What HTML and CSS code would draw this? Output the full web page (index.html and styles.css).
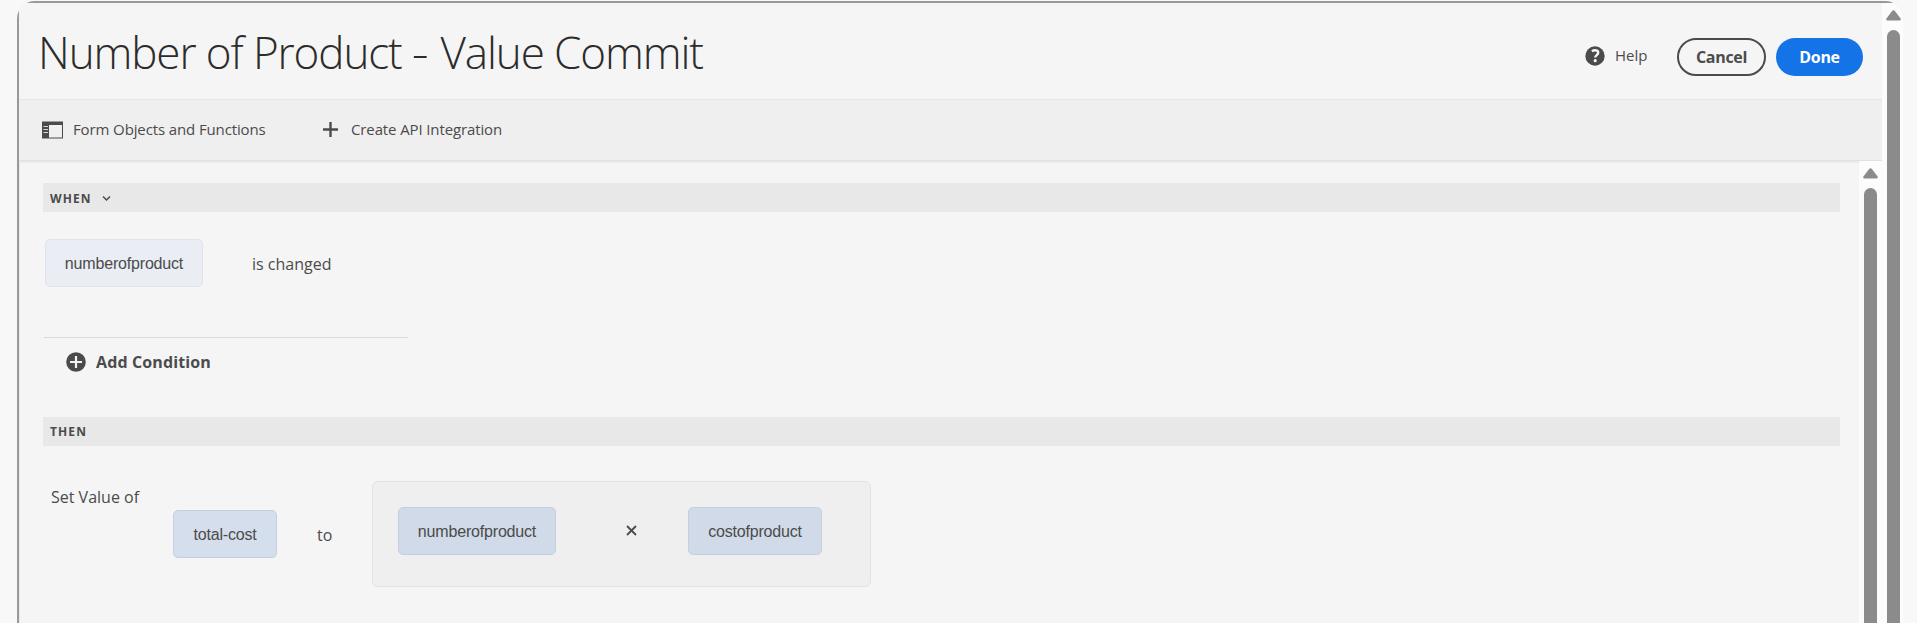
FILE: index.html
```html
<!DOCTYPE html>
<html lang="en">
<head>
<meta charset="utf-8">
<title>Rule Editor</title>
<link rel="stylesheet" href="styles.css">
</head>
<body>
<div class="panel">
  <div class="main">
    <header class="header">
      <h1 class="title">Number of Product <span class="dash">-</span> Value Commit</h1>
      <div class="actions">
        <svg class="help-icon" width="20" height="20" viewBox="0 0 20 20"><circle cx="10" cy="10" r="9.7" fill="#4b4b4b"/><path d="M6.900 5.300C8 4.500 9 4.200 10.200 4.200c1.900 0 3 1 3 2.500 0 2.200-3 2.500-3 4.800" fill="none" stroke="#f5f5f5" stroke-width="2.400"/><circle cx="10.200" cy="14.700" r="1.600" fill="#f5f5f5"/></svg>
        <span class="help">Help</span>
        <button class="btn cancel"><span>Cancel</span></button>
        <button class="btn done"><span>Done</span></button>
      </div>
    </header>
    <nav class="toolbar">
      <svg class="rail-icon" width="21" height="18" viewBox="0 0 21 18"><path d="M0 .5h21v17H0z" fill="#4b4b4b"/><path d="M7 4h13v12.500H7z" fill="#f0f0f0"/><path d="M1.500 5.500h4.500M1.500 8.500h4.500M1.500 11.500h4.500" stroke="#d8d8d8" stroke-width="1.200"/></svg>
      <span class="tool form-objects">Form Objects and Functions</span>
      <svg class="plus-icon" width="15" height="15" viewBox="0 0 15 15"><path d="M7.500 0v15M0 7.500h15" stroke="#4b4b4b" stroke-width="2.400"/></svg>
      <span class="tool api">Create API Integration</span>
    </nav>
    <div class="body">
      <div class="rule">
        <div class="section"><span class="when">WHEN</span><svg width="9" height="7" viewBox="0 0 9 7"><path d="M1 1.500l3.500 3.500L8 1.500" fill="none" stroke="#4b4b4b" stroke-width="1.500"/></svg></div>
        <div class="condition"><span class="chip pale"><span class="number">numberofproduct</span></span><span class="phrase changed">is changed</span></div>
        <div class="add">
          <svg width="20" height="20" viewBox="0 0 20 20"><circle cx="10" cy="10" r="9.800" fill="#4b4b4b"/><path d="M10 4v12M4 10h12" stroke="#f5f5f5" stroke-width="2.200"/></svg>
          <span class="add-label">Add Condition</span>
        </div>
        <div class="section then-bar"><span class="then">THEN</span></div>
        <div class="statement">
          <span class="phrase set">Set Value of</span>
          <span class="chip total"><span class="total-text">total-cost</span></span>
          <span class="phrase to">to</span>
          <div class="expression">
            <span class="chip factor"><span class="number">numberofproduct</span></span>
            <svg class="times" width="11" height="11" viewBox="0 0 11 11"><path d="M1 1l9 9M10 1l-9 9" stroke="#4b4b4b" stroke-width="1.800"/></svg>
            <span class="chip cost"><span class="cost-text">costofproduct</span></span>
          </div>
        </div>
      </div>
      <div class="scrollbar inner"><svg width="15" height="11" viewBox="0 0 15 11"><path d="M6.300.8Q7.500-.5 8.700.8L14.600 8.500Q15.200 10.500 13.500 10.500H1.500Q-.2 10.500.4 8.500Z" fill="#8b8b8b"/></svg><div class="thumb"></div></div>
    </div>
  </div>
  <div class="scrollbar outer"><svg width="15" height="11" viewBox="0 0 15 11"><path d="M6.300.8Q7.500-.5 8.700.8L14.600 8.500Q15.200 10.500 13.500 10.500H1.500Q-.2 10.500.4 8.500Z" fill="#8b8b8b"/></svg><div class="thumb"></div></div>
</div>
</body>
</html>
```
FILE: styles.css
```css
* { box-sizing: border-box; }
html, body { height: 100%; overflow: hidden; }
body { margin: 0; padding: 1px 14px 0 17px; background: #f8f8f8; color: #4b4b4b; font-family: "Open Sans", "Noto Sans", sans-serif; }
svg { display: block; flex: none; }
span { white-space: nowrap; }
.panel { display: flex; width: 1886px; height: 640px; padding: 2px 0 0 2px; border-radius: 18px; background: linear-gradient(#999, #999) 0 0 / 100% 2px no-repeat, linear-gradient(#999, #999) 0 0 / 2px 100% no-repeat, #f5f5f5; overflow: hidden; }
.main { width: 1863px; flex: none; }
.header { display: flex; justify-content: space-between; height: 96px; padding-left: 19px; }
.title { margin: 17px 0 0; font-size: 44px; line-height: 64px; font-weight: 300; color: #2c2c2c; letter-spacing: -1.100px; white-space: nowrap; }
.dash { display: inline-block; margin: 0 4px 0 1px; transform: scaleX(1.2); }
.actions { display: flex; align-items: flex-start; padding: 35px 19px 0 0; }
.help-icon { margin-top: 8px; }
.help { width: 32px; margin: 5px 30px 0 10px; font-size: 15px; line-height: 24px; }
.btn { display: flex; align-items: center; justify-content: center; height: 38px; padding: 0; border-radius: 19px; font: 700 16px/22px "Open Sans", sans-serif; letter-spacing: -.300px; }
.cancel { width: 89px; margin-right: 10px; border: 2px solid #4b4b4b; background: transparent; color: #4b4b4b; }
.done { width: 87px; border: 0; background: #1473e6; color: #fff; }
.toolbar { display: flex; align-items: center; height: 62px; padding-left: 23px; border-top: 1px solid #e6e6e6; border-bottom: 1px solid #e1e1e1; background: #efefef; }
.tool { margin-bottom: 2px; font-size: 15px; line-height: 24px; letter-spacing: -.120px; }
.plus-icon { margin-bottom: 2px; }
.form-objects { width: 193px; margin-right: 57px; margin-left: 10px; }
.api { margin-left: 13px; }
.body { display: flex; height: 480px; border-left: 1px solid #e8e8e8; }
.rule { width: 1839px; padding: 20px 19px 0 23px; border-top: 2px solid #eaeaea; }
.section { display: flex; align-items: center; gap: 10px; height: 29px; padding: 2px 0 0 7px; background: #e8e8e8; font-size: 12px; line-height: 20px; font-weight: 700; letter-spacing: 1.100px; }
.then-bar { padding-top: 0; }
.condition { display: flex; align-items: center; margin: 27px 0 0 2px; }
.chip { display: flex; align-items: center; justify-content: center; flex: none; height: 48px; padding-top: 2px; border: 1px solid #c5cfdf; border-radius: 5px; font: 16px/22px "Liberation Sans", Arial, sans-serif; }
.pale { width: 158px; background: #eaedf3; border-color: #dde3e8; }
.phrase { font-size: 16px; line-height: 24px; }
.changed { margin: 2px 0 0 49px; }
.add { display: flex; gap: 10px; width: 364px; height: 80px; margin: 50px 0 0 1px; padding: 14px 0 0 22px; border-top: 1px solid #dadada; }
.add-label { font-size: 16px; font-weight: 700; line-height: 20px; letter-spacing: .130px; }
.statement { display: flex; align-items: flex-start; padding: 35px 0 0 8px; }
.set { width: 122px; margin-top: 4px; }
.total { width: 104px; margin-top: 29px; background: #d5deec; }
.to { width: 55px; margin: 42px 0 0 40px; }
.expression { display: flex; width: 499px; height: 106px; padding: 25px 0 0 25px; border: 1px solid #e3e3e3; border-radius: 6px; background: #efefef; }
.factor { width: 158px; background: #d1dae8; }
.times { margin: 18px 51px 0 70px; }
.cost { width: 134px; background: #d1dae8; }
.number, .cost-text, .total-text { letter-spacing: -.180px; }
.scrollbar { flex: none; background: #fcfcfc; }
.thumb { width: 13px; height: 620px; border-radius: 7px 7px 0 0; background: #8b8b8b; }
.outer { width: 21px; padding: 7px 0 0 4px; }
.outer .thumb { margin: 9px 0 0 1px; }
.inner { width: 23px; height: 480px; padding: 7px 0 0 4px; overflow: hidden; }
.inner .thumb { margin: 9px 0 0 1px; }
```
